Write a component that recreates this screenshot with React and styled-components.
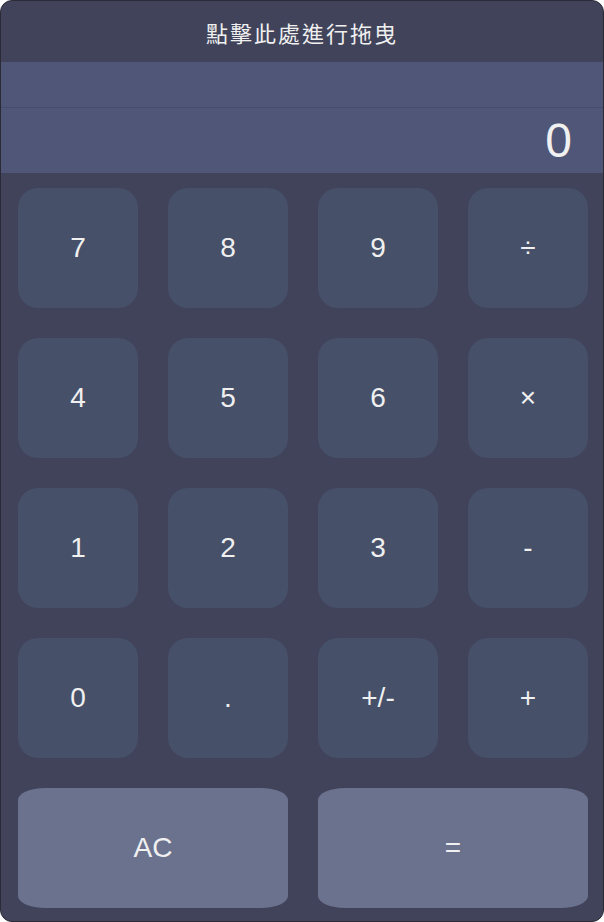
import React from 'react'
import styled, { createGlobalStyle } from 'styled-components'

const GlobalStyle = createGlobalStyle`
body {
  margin: 0;
  background-color: white;
  font-family: "Liberation Sans", Arial, "Noto Sans CJK TC", sans-serif;
}
`

const Frame = styled.div`
width: 604px;
height: 922px;
box-sizing: border-box;
border: 1px solid #2a2b36;
border-radius: 12px;
overflow: hidden;
background-color: #40435a;
display: flex;
flex-direction: column;
`

const TitleBar = styled.div`
height: 61px;
display: flex;
align-items: center;
justify-content: center;
color: #f0f0f0;
font-size: 22px;
letter-spacing: 2px;
font-family: "Noto Sans CJK TC", "Liberation Sans", sans-serif;
cursor: move;
`

const Display = styled.div`
background-color: #4f5677;
display: flex;
flex-direction: column;
`

const History = styled.div`
height: 45px;
border-bottom: 1px solid #464c6b;
`

const Current = styled.div`
height: 65px;
display: flex;
align-items: center;
justify-content: flex-end;
padding: 0 31px;
font-size: 48px;
color: #f0f0f0;
`

const Keypad = styled.div`
flex: 1;
display: grid;
grid-template-columns: repeat(4, 120px);
grid-auto-rows: 120px;
gap: 30px;
justify-content: center;
padding: 15px 0 0 2px;
`

const Key = styled.button`
grid-column: span ${(props) => props.span || 1};
border: none;
border-radius: ${(props) => props.span === 2 ? '10%' : '20px'};
background-color: ${(props) => props.type === 'wide' ? '#6b728e' : '#465069'};
color: #f0f0f0;
font-family: "Liberation Sans", Arial, sans-serif;
font-size: 28px;
cursor: pointer;
padding: 0;
`

const keys = ['7', '8', '9', '÷', '4', '5', '6', '×', '1', '2', '3', '-', '0', '.', '+/-', '+']

export default function App() {
  return (
    <>
      <GlobalStyle />
      <Frame>
        <TitleBar>點擊此處進行拖曳</TitleBar>
        <Display>
          <History />
          <Current>0</Current>
        </Display>
        <Keypad>
          {keys.map((k) => (
            <Key key={k}>{k}</Key>
          ))}
          <Key span={2} type="wide">AC</Key>
          <Key span={2} type="wide">=</Key>
        </Keypad>
      </Frame>
    </>
  )
}
